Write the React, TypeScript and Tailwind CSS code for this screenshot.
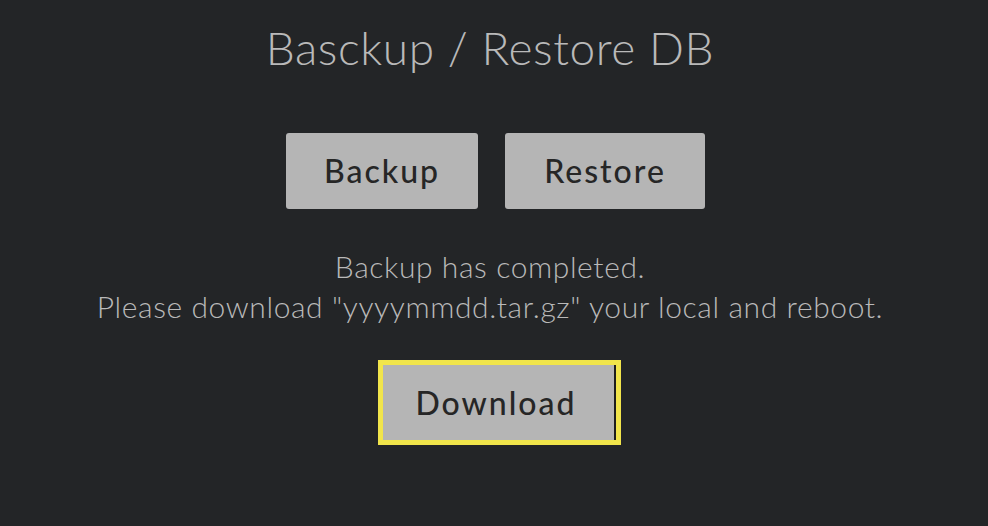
export default function App() {
  return (
    <main className="flex h-[526px] w-[988px] flex-col items-center bg-[#232527] font-['Lato',sans-serif] text-[#b9b9b9]">
      <h1 className="mt-[22px] mr-[8px] text-[46px] leading-[52px] font-light tracking-[0.6px]">
        Basckup / Restore DB
      </h1>

      <div className="mt-[59px] flex gap-[27px] pl-[3px]">
        <button className="h-[76px] w-[192px] rounded-[3px] bg-[#b5b5b5] text-[32px] font-medium tracking-[2px] text-[#262626]">
          Backup
        </button>
        <button className="h-[76px] w-[200px] rounded-[3px] bg-[#b5b5b5] text-[32px] font-medium tracking-[2px] text-[#262626]">
          Restore
        </button>
      </div>

      <p className="mt-[37px] mr-[8px] text-center text-[30px] leading-[40px] font-light tracking-[0.6px]">
        Backup has completed.
        <br />
        Please download "yyyymmdd.tar.gz" your local and reboot.
      </p>

      <button className="mt-[34px] ml-[10px] h-[85px] w-[243px] border-[5px] border-[#f1e54b] bg-[#b5b5b5] pr-[6px] text-[32px] font-medium tracking-[2px] text-[#262626] shadow-[inset_-2px_0_0_#1e1e1e]">
        Download
      </button>
    </main>
  );
}
